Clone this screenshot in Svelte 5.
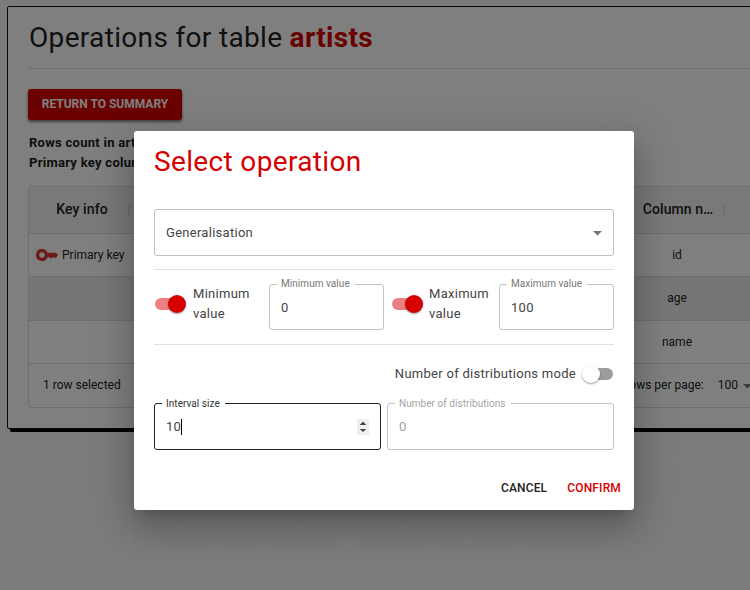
<script>
  const columns = { key: 'Key info', name: 'Column n…' };
  const rows = [
    { primary: true, name: 'id' },
    { primary: false, name: 'age', selected: true },
    { primary: false, name: 'name' }
  ];
</script>

{#snippet toggle(on)}
  <span class="toggle" class:on><span class="track"></span><span class="thumb"></span></span>
{/snippet}

{#snippet field(label, value, kind)}
  <div class="field {kind}">
    <span class="label">{label}</span>
    <span class="value">{value}</span>
    {#if kind === 'focused'}
      <span class="caret"></span>
      <svg class="spinner" width="12" height="16" viewBox="0 0 12 16">
        <rect width="12" height="16" fill="#efefef" />
        <path d="M6 2.5L9.3 6H2.7zM6 13L9.3 10H2.7z" fill="#444" />
      </svg>
    {/if}
  </div>
{/snippet}

<div class="page">
  <svg class="pattern" width="750" height="590" viewBox="0 0 750 590" fill="none" stroke="#fff" stroke-opacity=".22" stroke-width="3">
    <path d="M0 572L120 505L129 510V550L190 590M0 548L70 588L129 555M155 510L240 565L325 510M240 565V590M348 532V590M385 515L500 590M520 420V590M690 545V470L655 448M690 470L750 438" />
    <path d="M260 590L330 555L400 590" />
    <path stroke-width="1" d="M0 471H60L85 485H134M670 514H750M10 475V505L38 518L62 500V475" />
    <g fill="#fff" fill-opacity=".25" stroke="none"><circle cx="348" cy="533" r="14" /><circle cx="466" cy="526" r="14" /><circle cx="690" cy="548" r="14" /><circle cx="54" cy="563" r="3" /></g>
  </svg>

  <main class="card">
    <h1>Operations for table <b>artists</b></h1>
    <button class="return">RETURN TO SUMMARY</button>
    <div class="info"><p>Rows count in art</p><p>Primary key colum</p></div>

    <section class="grid">
      <div class="row head">
        <div class="key">{columns.key}<i></i></div>
        <div class="middle"></div>
        <div class="name">{columns.name}<i></i></div>
      </div>
      {#each rows as row}
        <div class="row" class:selected={row.selected}>
          <div class="key">
            {#if row.primary}
              <svg width="22" height="12" viewBox="0 0 22 12" fill="#d93232"><path fill-rule="evenodd" d="M6 0a6 6 0 0 1 5.6 3.8H20L22 6l-2.2 3h-1.4l-1-1.2L16 9.3h-1.6l-1-1.1h-1.8A6 6 0 1 1 6 0zm0 3.3a2.7 2.7 0 1 0 0 5.4 2.7 2.7 0 0 0 0-5.4z" /></svg>
              <span>Primary key</span>
            {/if}
          </div>
          <div class="middle"></div>
          <div class="name">{row.name}</div>
        </div>
      {/each}
      <div class="foot">
        <span>1 row selected</span>
        <span class="paging"><span>Rows per page:</span><span class="size">100</span>
          <svg width="9" height="5" viewBox="0 0 9 5"><path d="M0 0h9L4.5 4.5z" fill="#757575" /></svg></span>
      </div>
    </section>
  </main>
</div>

<div class="backdrop">
  <div class="dialog" role="dialog">
    <h2>Select operation</h2>
    <div class="select"><span>Generalisation</span>
      <svg width="9" height="5" viewBox="0 0 9 5"><path d="M0 0h9L4.5 4.5z" fill="#757575" /></svg></div>
    <div class="limits">
      {@render toggle(true)}
      <span class="caption">Minimum value</span>
      {@render field('Minimum value', '0', 'small')}
      {@render toggle(true)}
      <span class="caption">Maximum value</span>
      {@render field('Maximum value', '100', 'small')}
    </div>
    <div class="mode"><span>Number of distributions mode</span>{@render toggle(false)}</div>
    <div class="fields">
      {@render field('Interval size', '10', 'focused')}
      {@render field('Number of distributions', '0', 'disabled')}
    </div>
    <div class="actions"><button>CANCEL</button><button class="confirm">CONFIRM</button></div>
  </div>
</div>

<style>
  :global(body) { overflow: hidden; }
  * { box-sizing: border-box; }
  .page, .backdrop { font-family: Roboto, sans-serif; font-size: 13px; color: #212121; }
  button { font-family: inherit; border: 0; background: none; padding: 0; white-space: nowrap; }
  h1, h2, p { margin: 0; }
  .page { position: relative; width: 750px; height: 590px; overflow: hidden; background: #f6f6f6; padding: 6px 0 0 7px; }
  .pattern { position: absolute; inset: 0; }
  .card { position: relative; width: 800px; height: 423px; background: #fff; border: 1px solid #111; border-radius: 2px; box-shadow: 3px 3px 0 #000; padding: 0 20px; }
  h1 { height: 62px; border-bottom: 1px solid #ddd; padding-left: 1px; font-size: 28px; font-weight: 400; line-height: 61px; letter-spacing: .33px; white-space: nowrap; }
  h1 b { color: #d50000; }
  .return { display: block; margin-top: 20px; width: 154px; height: 31px; padding-bottom: 2px; background: #d50000; color: #fff; border-radius: 3px; font-size: 12px; font-weight: 700; box-shadow: 0 2px 3px rgba(0,0,0,.5); }
  .info { margin-top: 13px; padding-left: 1px; white-space: nowrap; font-weight: 700; line-height: 20px; letter-spacing: .28px; }
  .grid { margin-top: 13px; width: 760px; height: 222px; border: 1px solid #dcdcdc; border-radius: 3px; }
  .row { display: flex; height: 43px; border-bottom: 1px solid #dcdcdc; font-size: 12px; }
  .row.selected { height: 44px; }
  .row.head { height: 47px; background: #f3f3f3; font-size: 14px; font-weight: 500; letter-spacing: .1px; }
  .selected { background: #ededed; }
  .selected .name { padding-bottom: 1px; }
  .key, .name { position: relative; display: flex; align-items: center; justify-content: center; }
  .head .key { padding: 0 0 2px 0; }
  .head .name { padding: 0 0 2px 2px; }
  .key { width: 106px; }
  .key svg { margin-right: 4px; }
  .row:not(.head) .key { justify-content: flex-start; padding-left: 7px; }
  .middle { width: 489px; }
  .name { width: 106px; }
  .head i { position: absolute; right: 5px; top: 17px; width: 2px; height: 12px; background: #e0e0e0; }
  .foot { display: flex; height: 42px; align-items: center; justify-content: space-between; padding: 0 35px 0 14px; font-size: 12px; }
  .paging { display: flex; align-items: center; }
  .size { margin: 0 5px 0 14px; }
  .paging svg { margin-top: 2px; }

  .backdrop { position: absolute; inset: 0; width: 750px; height: 590px; overflow: hidden; background: rgba(0,0,0,.5); padding: 131px 0 0 134px; letter-spacing: .28px; color: #444; }
  .dialog { width: 500px; height: 379px; background: #fff; border-radius: 3px; padding: 0 20px; box-shadow: 0 9px 12px -6px rgba(0,0,0,.2), 0 20px 32px 2px rgba(0,0,0,.14), 0 8px 38px 7px rgba(0,0,0,.12); }
  h2 { height: 78px; color: #d50000; font-size: 28px; font-weight: 400; line-height: 62px; letter-spacing: .35px; }
  .select { height: 47px; border: 1px solid #c1c1c1; border-radius: 3px; display: flex; align-items: center; justify-content: space-between; padding: 0 11px; }
  .select svg { margin-top: 1px; }
  .limits { display: flex; align-items: center; height: 76px; margin-top: 13px; border: solid #e0e0e0; border-width: 1px 0; }
  .caption { flex: none; width: 76px; padding: 0 0 7px 8px; line-height: 20px; }
  .small + .toggle + .caption { width: 69px; padding-left: 7px; }
  .toggle { position: relative; flex: none; width: 31px; height: 18px; display: flex; align-items: center; }
  .toggle .track { width: 29px; height: 12px; border-radius: 6px; background: #9c9c9c; margin-left: 1px; }
  .toggle .thumb { position: absolute; left: -1px; top: 0; width: 18px; height: 18px; border-radius: 50%; background: #fff; box-shadow: 0 1px 2px rgba(0,0,0,.4); }
  .toggle.on .track { background: #ea8080; }
  .toggle.on .thumb { left: 14px; background: #d50000; }
  .limits .toggle { margin-bottom: 7px; }
  .field { position: relative; height: 47px; flex: 1; border: 1px solid #c1c1c1; border-radius: 3px; display: flex; align-items: center; padding: 0 11px; }
  .small { flex: none; width: 115px; height: 46px; }
  .limits .field { margin-left: 8px; margin-bottom: 1px; }
  .limits .field:last-child { margin-left: auto; }
  .small .value { padding-top: 2px; }
  .small + .toggle { margin-left: 7px; }
  .label { position: absolute; left: 7px; top: -8px; padding: 0 5px 0 4px; line-height: 15px; font-size: 10px; letter-spacing: .05px; background: #fff; color: #777; white-space: nowrap; }
  .small .label { line-height: 14px; }
  .focused { border-color: #212121; }
  .focused .label { color: #333; }
  .caret { width: 1px; height: 16px; background: #000; }
  .spinner { margin-left: auto; }
  .disabled, .disabled .label { color: #a3a3a3; }
  .mode { height: 58px; padding-bottom: 1px; display: flex; align-items: center; justify-content: flex-end; gap: 7px; }
  .fields { display: flex; gap: 6px; }
  .actions { height: 60px; margin-right: -7px; padding-top: 16px; display: flex; align-items: center; justify-content: flex-end; gap: 20px; }
  .actions button { font-size: 12px; font-weight: 500; color: #212121; letter-spacing: .15px; }
  .actions .confirm { color: #d50000; }
</style>
